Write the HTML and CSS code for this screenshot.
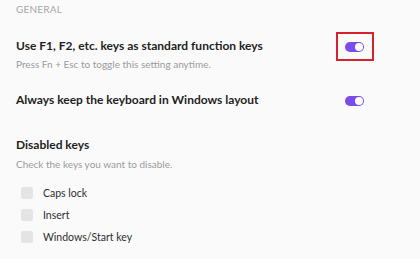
FILE: index.html
```html
<!DOCTYPE html>
<html>
<head>
<meta charset="utf-8">
<link rel="stylesheet" href="styles.css">
</head>
<body>
<div class="page">
  <div class="section-label">GENERAL</div>

  <div class="setting first">
    <div class="setting-row">
      <div class="setting-title">Use F1, F2, etc. keys as standard function keys</div>
      <div class="toggle highlighted"><span class="knob"></span></div>
    </div>
    <div class="setting-sub">Press Fn + Esc to toggle this setting anytime.</div>
  </div>

  <div class="setting second">
    <div class="setting-row">
      <div class="setting-title">Always keep the keyboard in Windows layout</div>
      <div class="toggle"><span class="knob"></span></div>
    </div>
  </div>

  <div class="setting third">
    <div class="setting-title">Disabled keys</div>
    <div class="setting-sub sub-gap">Check the keys you want to disable.</div>
    <ul class="checks">
      <li class="check-row"><span class="box"></span><span class="check-label">Caps lock</span></li>
      <li class="check-row"><span class="box"></span><span class="check-label">Insert</span></li>
      <li class="check-row"><span class="box"></span><span class="check-label">Windows/Start key</span></li>
    </ul>
  </div>
</div>
</body>
</html>
```

FILE: styles.css
```css
html, body {
  margin: 0;
  padding: 0;
  background: #fafafa;
}
body {
  font-family: Lato, "Open Sans", sans-serif;
  color: #1e1e1e;
  width: 420px;
  height: 259px;
  overflow: hidden;
}
.page {
  padding-left: 16px;
  width: 348px;
}
.section-label {
  font-size: 10px;
  line-height: 18px;
  color: #a6a6a6;
  letter-spacing: 0.2px;
}
.setting.first { margin-top: 20px; }
.setting.second { margin-top: 21px; }
.setting.third { margin-top: 29px; }
.setting-row {
  display: flex;
  align-items: center;
  justify-content: space-between;
}
.setting-title {
  font-size: 12px;
  font-weight: 700;
  line-height: 16px;
  color: #1e1e1e;
}
.setting-sub {
  margin-top: 3px;
  font-size: 10px;
  line-height: 14px;
  color: #9a9a9a;
}
.setting-sub.sub-gap { margin-top: 4px; }
.toggle {
  position: relative;
  width: 19px;
  height: 10px;
  border-radius: 5px;
  background: #7a4ceb;
  display: flex;
  align-items: center;
  justify-content: flex-end;
  padding-right: 1px;
  box-sizing: border-box;
  margin-top: 2px;
}
.knob {
  width: 8px;
  height: 8px;
  border-radius: 50%;
  background: #ffffff;
}
.toggle.highlighted::after {
  content: "";
  position: absolute;
  left: -9px;
  right: -10px;
  top: -10px;
  bottom: -9px;
  border: 2px solid #d8212b;
}
.checks {
  list-style: none;
  margin: 11px 0 0 0;
  padding: 0;
}
.check-row {
  display: flex;
  align-items: center;
  height: 22px;
  padding-left: 5px;
}
.box {
  width: 12px;
  height: 12px;
  border-radius: 2px;
  background: #e4e4e4;
  margin-right: 10px;
}
.check-label {
  font-size: 10.5px;
  color: #2e2e2e;
}
```
